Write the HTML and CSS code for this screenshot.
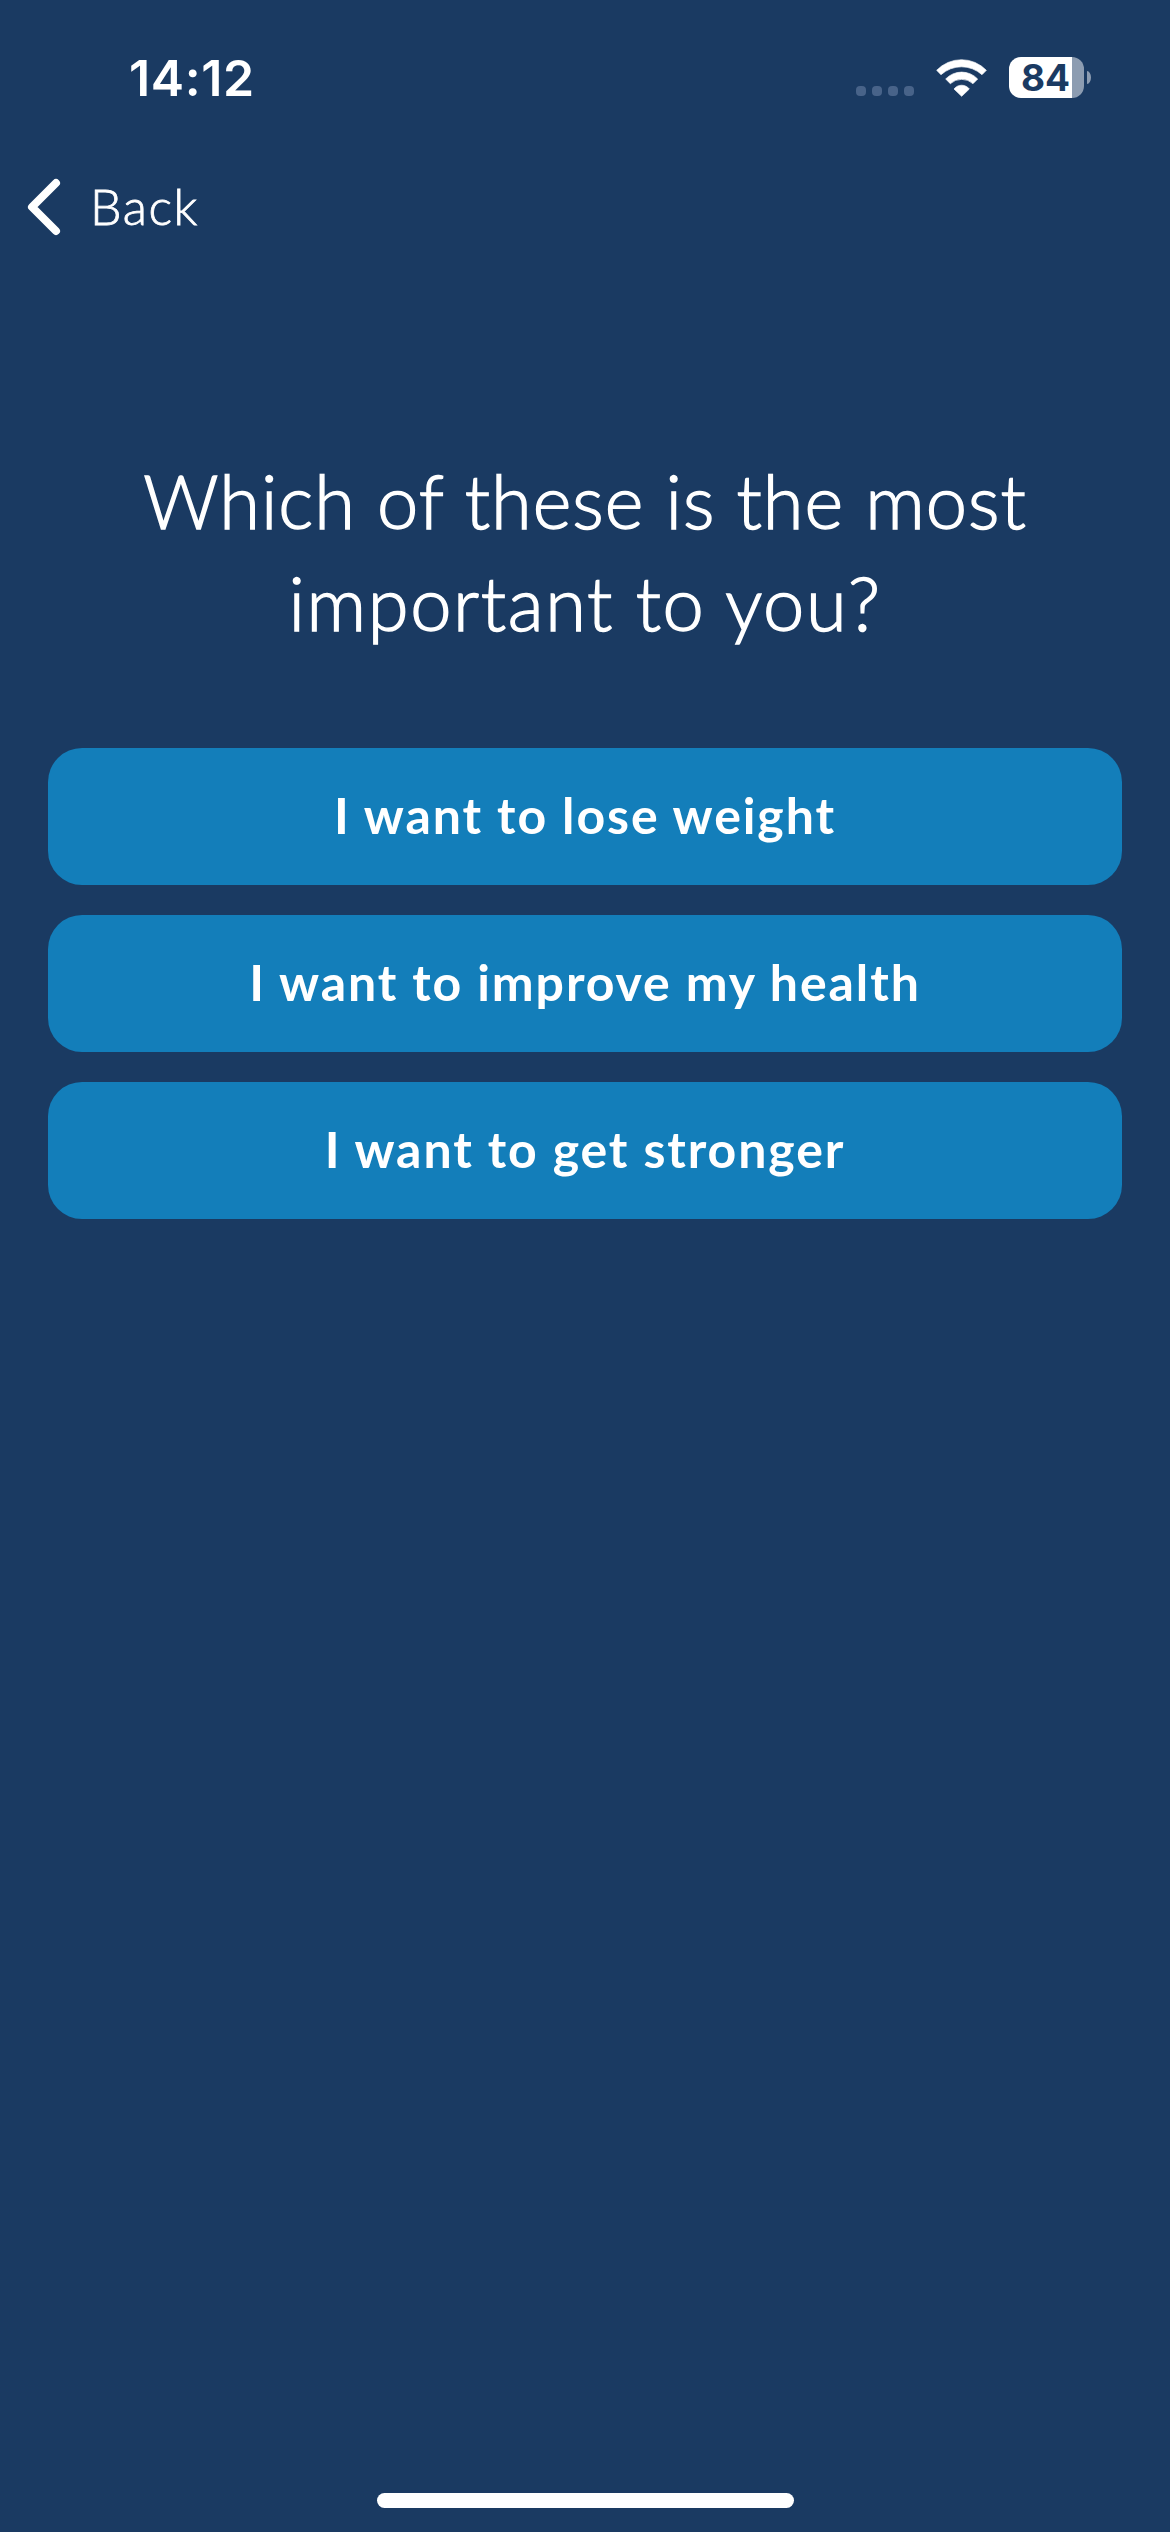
FILE: index.html
```html
<!DOCTYPE html>
<html lang="en">

<head>
    <meta charset="UTF-8">
    <meta name="viewport" content="width=device-width, initial-scale=1.0">
    <title>Your goal</title>
    <link rel="stylesheet" href="styles.css">
</head>

<body>
    <div class="screen">
        <div class="status-bar">
            <span class="time">14:12</span>
            <div class="status-icons">
                <div class="signal">
                    <span></span><span></span><span></span><span></span>
                </div>
                <svg class="wifi" viewBox="288 56 153 114" fill="#fff" stroke="#fff" stroke-width="2" stroke-linejoin="round">
                    <path d="M290 90A103 103 0 0 1 439 90L426 103A92 92 0 0 0 303 103Z" />
                    <path d="M317 116A66 66 0 0 1 413 116L399 130A51 51 0 0 0 331 130Z" />
                    <path d="M342 146A29 29 0 0 1 388 146L365 168Z" />
                </svg>
                <div class="battery">
                    <span class="battery-level">84</span>
                </div>
                <span class="battery-cap"></span>
            </div>
        </div>

        <a class="back" href="#">
            <svg class="back-icon" viewBox="0 0 34 58" fill="none" stroke="#fff" stroke-width="8" stroke-linecap="round" stroke-linejoin="round">
                <path d="M29 5L5 29L29 53" />
            </svg>
            <span class="back-text">Back</span>
        </a>

        <h1 class="question">
            <span class="line-one">Which of these is the most</span><br>
            <span class="line-two">important to you?</span>
        </h1>

        <div class="options">
            <button class="option">I want to lose weight</button>
            <button class="option">I want to improve my health</button>
            <button class="option">I want to get stronger</button>
        </div>

        <div class="home-indicator"></div>
    </div>
</body>

</html>
```

FILE: styles.css
```css
* {
    box-sizing: border-box;
}

body {
    margin: 0;
    background-color: #1a3a62;
    color: #fff;
    font-family: Lato, "Open Sans", sans-serif;
}

.screen {
    display: flex;
    flex-direction: column;
    height: 2532px;
}

.status-bar {
    display: flex;
    justify-content: space-between;
    height: 150px;
    padding: 48px 79px 0 129px;
}

.time {
    font-family: Inter, sans-serif;
    font-size: 50px;
    font-weight: 600;
    line-height: 60px;
    letter-spacing: 0.6px;
}

.status-icons {
    display: flex;
    align-items: flex-start;
    padding-top: 9px;
}

.signal {
    display: flex;
    gap: 6px;
    margin: 29px 22px 0 0;
}

.signal span {
    width: 10px;
    height: 10px;
    border-radius: 4px;
    background-color: #486389;
}

.wifi {
    width: 51px;
    height: 38px;
    margin: 2px 22px 0 0;
}

.battery {
    width: 75px;
    height: 41px;
    border-radius: 12px;
    background: linear-gradient(to right, #fff 63px, #8c9cb1 63px);
}

.battery-level {
    display: block;
    padding-left: 12px;
    color: #1a3a62;
    font-family: Inter, sans-serif;
    font-size: 37px;
    font-weight: 700;
    line-height: 41px;
}

.battery-cap {
    width: 4px;
    height: 13px;
    margin: 14px 0 0 3px;
    border-radius: 0 4px 4px 0 / 0 6.5px 6.5px 0;
    background-color: #8c9cb1;
}

.back {
    display: flex;
    align-items: center;
    height: 114px;
    padding-left: 27px;
    color: #fff;
    text-decoration: none;
}

.back-icon {
    width: 34px;
    height: 58px;
}

.back-text {
    margin: -2px 0 0 29px;
    font-size: 50px;
    font-weight: 300;
    line-height: 60px;
    letter-spacing: 1.5px;
    -webkit-text-stroke: 0.8px #fff;
}

.question {
    margin: 186px 0 0;
    font-size: 74px;
    font-weight: 300;
    line-height: 102px;
    text-align: center;
    -webkit-text-stroke: 1.4px #fff;
}

.line-one {
    letter-spacing: 1px;
}

.line-two {
    letter-spacing: 1.6px;
}

.options {
    display: flex;
    flex-direction: column;
    gap: 30px;
    margin-top: 94px;
    padding: 0 48px;
}

.option {
    height: 137px;
    padding: 0 0 4px;
    border: none;
    border-radius: 34px;
    background-color: #137eba;
    color: #fff;
    font-family: inherit;
    font-size: 50px;
    font-weight: 700;
    letter-spacing: 1.9px;
    cursor: pointer;
}

.home-indicator {
    width: 417px;
    height: 15px;
    margin: auto auto 24px;
    border-radius: 8px;
    background-color: #fff;
}
```
